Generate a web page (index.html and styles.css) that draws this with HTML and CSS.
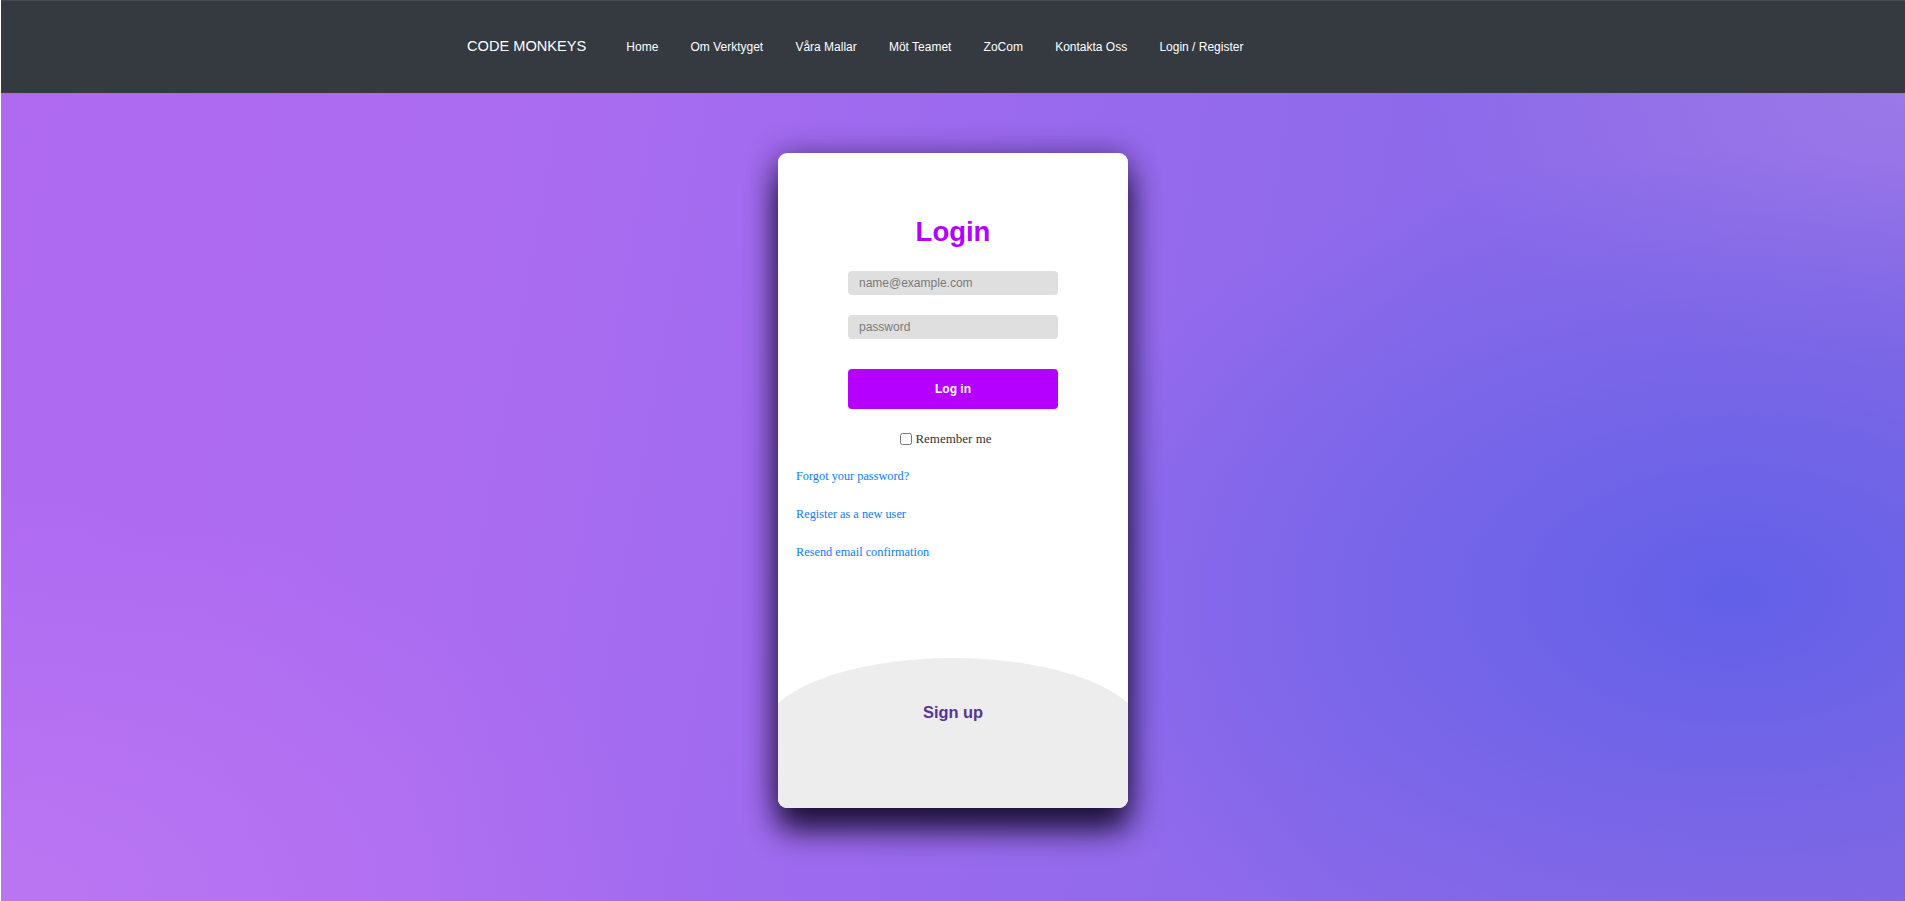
FILE: index.html
```html
<!DOCTYPE html>
<html lang="sv">
<head>
<meta charset="utf-8">
<title>Login - Code Monkeys</title>
<link rel="stylesheet" href="styles.css">
</head>
<body>
<div class="page">
  <header class="navbar">
    <nav class="nav-inner">
      <a class="brand" href="#">CODE MONKEYS</a>
      <ul class="nav-links">
        <li><a href="#">Home</a></li>
        <li><a href="#">Om Verktyget</a></li>
        <li><a href="#">Våra Mallar</a></li>
        <li><a href="#">Möt Teamet</a></li>
        <li><a href="#">ZoCom</a></li>
        <li><a href="#">Kontakta Oss</a></li>
        <li><a href="#">Login / Register</a></li>
      </ul>
    </nav>
  </header>
  <main class="main">
    <section class="card">
      <form class="login-form">
        <h1 class="title">Login</h1>
        <input class="field field-email" type="email" placeholder="name@example.com">
        <input class="field field-pass" type="password" placeholder="password">
        <button class="btn-login" type="button">Log in</button>
        <label class="remember"><input class="check" type="checkbox"><span>Remember me</span></label>
      </form>
      <div class="links">
        <a href="#">Forgot your password?</a>
        <a href="#">Register as a new user</a>
        <a href="#">Resend email confirmation</a>
      </div>
      <div class="signup">
        <span class="signup-text">Sign up</span>
      </div>
    </section>
  </main>
</div>
</body>
</html>
```

FILE: styles.css
```css
* { box-sizing: border-box; }

html, body {
  margin: 0;
  padding: 0;
  height: 100%;
}

body {
  font-family: "Liberation Sans", Arial, sans-serif;
  overflow: hidden;
}

.page {
  display: flex;
  flex-direction: column;
  height: 901px;
  border-left: 1px solid rgba(255, 255, 255, 0.18);
}

.navbar {
  height: 93px;
  flex: 0 0 93px;
  background: #353a41;
  border-top: 1px solid #464a50;
  display: flex;
  align-items: center;
}

.nav-inner {
  width: 972px;
  margin: 0 auto;
  display: flex;
  align-items: center;
}

.brand {
  color: #ffffff;
  text-decoration: none;
  font-size: 14.6px;
  margin-right: 24px;
  position: relative;
  top: -1px;
}

.nav-links {
  list-style: none;
  margin: 0;
  padding: 0;
  display: flex;
}

.nav-links a {
  display: block;
  padding: 0 16.1px;
  color: #ffffff;
  text-decoration: none;
  font-size: 12px;
  line-height: 16px;
}

.main {
  flex: 1;
  display: flex;
  justify-content: center;
  align-items: flex-start;
  padding-top: 60px;
  background:
    radial-gradient(ellipse 38% 55% at 91% 62%, rgba(98, 96, 232, 1) 0%, rgba(104, 98, 232, 0.6) 45%, rgba(110, 100, 232, 0) 100%),
    radial-gradient(ellipse 25% 35% at 100% 0%, rgba(160, 124, 234, 0.8) 0%, rgba(160, 124, 234, 0) 100%),
    radial-gradient(ellipse 35% 50% at 0% 100%, rgba(186, 118, 242, 1) 0%, rgba(186, 118, 242, 0) 100%),
    linear-gradient(100deg, #b06af2 0%, #ab6cf1 25%, #9a6aee 50%, #8c6aea 72%, #8a6ae2 100%);
}

.card {
  width: 350px;
  height: 655px;
  background: #ffffff;
  border-radius: 9px;
  overflow: hidden;
  display: flex;
  flex-direction: column;
  box-shadow: 0 22px 30px rgba(12, 6, 30, 0.85), 0 0 30px rgba(30, 15, 60, 0.45);
}

.login-form {
  width: 210px;
  margin: 0 auto;
  padding-top: 63px;
  display: flex;
  flex-direction: column;
  align-items: stretch;
}

.title {
  margin: 0 0 23px;
  font-size: 27.5px;
  line-height: 32px;
  font-weight: bold;
  color: #b500ff;
  text-align: center;
}

.field {
  height: 24px;
  border: none;
  border-radius: 4px;
  background: #e0dfe0;
  padding: 0 11px;
  font-family: "Liberation Sans", Arial, sans-serif;
  font-size: 12px;
  color: #333;
  outline: none;
}

.field::placeholder {
  color: #7a7a7a;
}

.field-email { margin-bottom: 20px; }

.btn-login {
  margin-top: 30px;
  height: 40px;
  border: none;
  border-radius: 4px;
  background: #b500ff;
  color: #ffffff;
  font-family: "Liberation Sans", Arial, sans-serif;
  font-size: 12px;
  font-weight: bold;
  cursor: pointer;
}

.remember {
  margin-top: 22px;
  display: flex;
  align-items: center;
  justify-content: center;
  padding-right: 14px;
  font-family: "Liberation Serif", "Times New Roman", serif;
  font-size: 13px;
  font-weight: normal;
  line-height: 16px;
  color: #333333;
}

.check {
  width: 12px;
  height: 12px;
  margin: 0 3px 0 0;
}

.links {
  margin-top: 21px;
  padding-left: 18px;
  display: flex;
  flex-direction: column;
  gap: 22px;
}

.links a {
  font-family: "Liberation Serif", "Times New Roman", serif;
  font-size: 12.3px;
  line-height: 16px;
  color: #0b7cf7;
  text-decoration: none;
}

.signup {
  margin-top: auto;
  height: 150px;
  width: 380px;
  margin-left: -15px;
  flex: 0 0 150px;
  background: #ededed;
  border-radius: 190px 190px 0 0 / 74px 74px 0 0;
  display: flex;
  justify-content: center;
  padding-top: 44px;
}

.signup-text {
  font-size: 16.4px;
  line-height: 20px;
  font-weight: bold;
  color: #573495;
}
```
